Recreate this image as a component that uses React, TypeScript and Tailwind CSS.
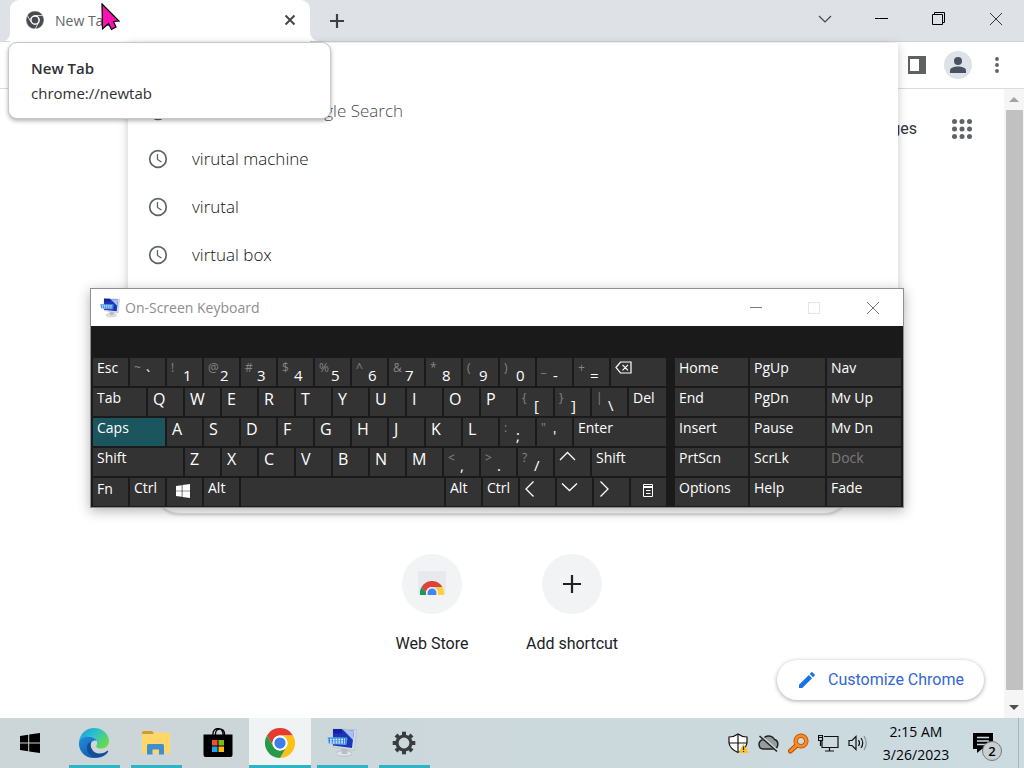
import React from "react";

const segoe = "font-['Open_Sans','Noto_Sans',sans-serif]";

function ChromeLogo({ className, mono = false }: { className: string; mono?: boolean }) {
  const c = mono ? ["#474a4e", "#474a4e", "#474a4e", "#474a4e"] : ["#e33b2e", "#fbc116", "#269a48", "#3f7ee8"];
  const line = mono ? "#ffffff" : "none";
  return (
    <svg viewBox="0 0 48 48" className={className} aria-hidden="true">
      <g stroke={line} strokeWidth="1.500">
        <path fill={c[0]} d="M24 12H44.8A24 24 0 0 0 3.2 12L13.6 30A12 12 0 0 1 24 12z" />
        <path fill={c[1]} d="M44.8 12A24 24 0 0 1 24 48L34.4 30A12 12 0 0 0 24 12z" />
        <path fill={c[2]} d="M24 48A24 24 0 0 1 3.2 12L13.6 30A12 12 0 0 0 34.4 30z" />
      </g>
      <circle cx="24" cy="24" r="12" fill="#fff" />
      <circle cx="24" cy="24" r="9" fill={c[3]} />
    </svg>
  );
}

function WindowsLogo({ className }: { className: string }) {
  return (
    <svg viewBox="0 0 20 20" className={className} fill="currentColor" aria-hidden="true">
      <path d="M0 2.9L8.2 1.7V9.5H0zM9.2 1.5L20 0V9.5H9.2zM0 10.5H8.2V18.3L0 17.1zM9.2 10.5H20V20L9.2 18.5z" />
    </svg>
  );
}

function KeyboardAppIcon({ className }: { className: string }) {
  return (
    <svg viewBox="0 0 30 30" className={className} aria-hidden="true">
      <ellipse cx="17" cy="25.500" rx="8" ry="2.800" fill="#dfe3e6" stroke="#a9aeb3" strokeWidth=".6" />
      <path d="M14 20h7l-1 6h-5z" fill="#b9bec3" />
      <path d="M6 1L29.500 1.500L27.500 22.500L6 19z" fill="#d5dbe4" stroke="#aab2bf" strokeWidth=".5" />
      <path d="M6 1L27 2.500L25 20L6 17.500z" fill="#1b35b8" />
      <path d="M16 1.700L27 2.500L26 12z" fill="#a9c2f4" />
      <path d="M6 1h9v4.500H6z" fill="#1620a5" />
      <path d="M1 9.500L20 10L19 16.500L2 15.500z" fill="#2f83dc" stroke="#6bb0f0" strokeWidth=".8" />
      <g stroke="#e5f4ff" strokeWidth="1.200" strokeDasharray="1.800 1">
        <path d="M3 11.300H18M3 13.100H18M3 14.900H18" />
      </g>
    </svg>
  );
}

function EdgeIcon() {
  return (
    <svg viewBox="0 0 30 30" className="size-[30px]" aria-hidden="true">
      <defs>
        <linearGradient id="edgeTop" x1="0" y1="0" x2="1" y2=".6">
          <stop offset="0" stopColor="#1b98da" />
          <stop offset=".5" stopColor="#2bc0cf" />
          <stop offset="1" stopColor="#68d94e" />
        </linearGradient>
        <linearGradient id="edgeLow" x1="0" y1="0" x2=".6" y2="1">
          <stop offset="0" stopColor="#1e8fdc" />
          <stop offset="1" stopColor="#155fb0" />
        </linearGradient>
      </defs>
      <path fill="url(#edgeTop)" d="M0 14C1 6 7 0 15 0C24 0 30 6.500 30 13C30 18 26 20.500 22 20.500C18 20.500 16.500 19 17.500 17.500C19.500 14.500 17 8.500 10.500 8.500C5.500 8.500 1.500 11 0 14z" />
      <path fill="url(#edgeLow)" d="M0 14C2 9.500 7 8 11 8.500C14.500 9 17 11 17.800 13C15 11.500 10.500 14.500 10.500 19C10.500 24.500 15 29 19 29.300C8 32.500 -1 24 0 14z" />
      <path fill="#144d97" d="M12.500 13.500C10 19 14 25.500 20.500 25.500C24 25.500 26.500 24.200 27.800 23C29 22.300 29.500 23 29 24C27 27 23 29.500 18.500 29.700C12 29.500 7 24.500 8 18.500C8.600 15.600 10.500 14.200 12.500 13.500z" />
    </svg>
  );
}

function ExplorerIcon() {
  return (
    <svg viewBox="0 0 28 24" className="h-[24px] w-[28px]" aria-hidden="true">
      <path fill="#d99a22" d="M0 1.500Q0 0 1.500 0H10L12.500 3H0z" />
      <path fill="#ffd769" d="M0 3.500H10L13 1.500H26Q28 1.500 28 3.500V21Q28 22.500 26.500 22.500H1.500Q0 22.500 0 21z" />
      <path fill="#3f8fcf" d="M5 14.500Q5 13 6.500 13H20.500Q22 13 22 14.500V23.500H17V18.500H10.500V23.500H5z" />
    </svg>
  );
}

function StoreIcon() {
  return (
    <svg viewBox="0 0 30 30" className="size-[30px]" aria-hidden="true">
      <path d="M10 8V5.500a5 5 0 0 1 10 0V8M12.500 8V5.500a4.500 4.500 0 0 1 9 0V8" fill="none" stroke="#000" strokeWidth="1.300" />
      <path d="M.5 6.500H29.500V27Q29.500 29 27.500 29H2.500Q.5 29 .5 27z" />
      <path fill="#f0512d" d="M9 12h5.500v5.500H9z" />
      <path fill="#7fbb16" d="M15.500 12H21v5.500h-5.500z" />
      <path fill="#20a4ec" d="M9 18.500h5.500V24H9z" />
      <path fill="#fdb913" d="M15.500 18.500H21V24h-5.500z" />
    </svg>
  );
}

function GearIcon() {
  return (
    <svg viewBox="0 0 24 24" className="size-[24px]" aria-hidden="true">
      <g fill="none" stroke="#393d40">
        <circle cx="12" cy="12" r="7" strokeWidth="3.200" />
        <g strokeWidth="4">
          {[0, 45, 90, 135, 180, 225, 270, 315].map((a) => (
            <path key={a} d="M12 4.500V.7" transform={`rotate(${a} 12 12)`} />
          ))}
        </g>
      </g>
    </svg>
  );
}

const Close = ({ className }: { className: string }) => (
  <svg viewBox="0 0 14 14" className={className} fill="none" stroke="currentColor" aria-hidden="true">
    <path d="M1 1L13 13M13 1L1 13" />
  </svg>
);

function TabStrip() {
  return (
    <header className="flex h-[42px] shrink-0 border-b border-[#cfd2d5] bg-[#dee1e6]">
      <span className="w-[10px] shrink-0 bg-white"><span className="block h-[42px] w-full rounded-br-[9px] bg-[#dee1e6]" /></span>
      <div role="tab" aria-selected="true" className="flex h-[42px] w-[300px] items-center rounded-t-[9px] bg-white pr-[12px] pb-[2px] pl-[16px]">
        <ChromeLogo mono className="size-[18px]" />
        <span className={`flex-1 pl-[11px] text-[14px] text-[#64676b] ${segoe}`}>New Tab</span>
        <button aria-label="Close tab" className="grid size-[16px] place-items-center text-[#45484b]">
          <svg viewBox="0 0 12 12" className="size-[12px]" stroke="currentColor" strokeWidth="2" aria-hidden="true">
            <path d="M1.500 1.500L10.500 10.500M10.500 1.500L1.500 10.500" />
          </svg>
        </button>
      </div>
      <div className="flex flex-1 bg-white">
        <div className="flex h-[41px] flex-1 rounded-bl-[9px] bg-[#dee1e6]">
          <button aria-label="New tab" className="grid w-[54px] place-items-center text-[#3c4043]">
            <svg viewBox="0 0 14 14" className="size-[14px]" stroke="currentColor" strokeWidth="2.200" aria-hidden="true">
              <path d="M7 0V14M0 7H14" />
            </svg>
          </button>
          <div className="ml-auto flex h-[37px]">
            <button aria-label="Search tabs" className="grid w-[57px] place-items-center text-[#44474a]">
              <svg viewBox="0 0 14 8" className="h-[8px] w-[14px]" fill="none" stroke="currentColor" strokeWidth="1.200" aria-hidden="true">
                <path d="M1 1L7 7L13 1" />
              </svg>
            </button>
            <button aria-label="Minimize" className="grid w-[57px] place-items-center">
              <span className="h-px w-[13px] bg-black" />
            </button>
            <button aria-label="Restore" className="grid w-[57px] place-items-center">
              <svg viewBox="0 0 13 13" className="size-[13px]" fill="none" stroke="#000" aria-hidden="true">
                <path d="M.5 2.500H10.500V12.500H.5zM2.500 2.500V.5H12.500V10.500H10.500" />
              </svg>
            </button>
            <button aria-label="Close" className="grid w-[57px] place-items-center text-[#303236]">
              <Close className="size-[14px]" />
            </button>
          </div>
        </div>
      </div>
    </header>
  );
}

function Toolbar() {
  return (
    <div className="flex h-[47px] shrink-0 items-center justify-end border-b border-[#d9dbdd] bg-white pr-[25px]">
      <button aria-label="Side panel" className="mr-[18px]">
        <svg viewBox="0 0 18 18" className="size-[18px]" aria-hidden="true">
          <path fill="#5d6163" d="M0 0H18V18H0zM2 3V15H11V3z" fillRule="evenodd" />
        </svg>
      </button>
      <button aria-label="Profile" className="mr-[23px] grid size-[28px] place-items-center rounded-full bg-[#dde1e8]">
        <svg viewBox="0 0 16 16" className="size-[16px]" fill="#4a5163" aria-hidden="true">
          <circle cx="8" cy="4" r="4" />
          <path d="M0 16V13.500C0 10.500 4.500 9.500 8 9.500S16 10.500 16 13.500V16z" />
        </svg>
      </button>
      <button aria-label="Menu">
        <svg viewBox="0 0 4 16" className="h-[16px] w-[4px]" fill="#5d6163" aria-hidden="true">
          <circle cx="2" cy="2" r="1.900" /><circle cx="2" cy="8" r="1.900" /><circle cx="2" cy="14" r="1.900" />
        </svg>
      </button>
    </div>
  );
}

function Shortcut({ label, children }: { label: string; children: React.ReactNode }) {
  return (
    <a href="#" className="flex w-[140px] flex-col items-center gap-[18px]">
      <span className="grid size-[60px] place-items-center rounded-full bg-[#f1f3f4]">{children}</span>
      <span className="text-[16px] leading-[24px] text-[#202124]">{label}</span>
    </a>
  );
}

function NewTabPage() {
  return (
    <div className="flex min-h-0 flex-1 bg-white font-[Roboto,sans-serif]">
      <main className="relative flex flex-1 flex-col items-center">
        <nav className="flex h-[80px] w-full items-center justify-end gap-[35px] pr-[32px]">
          <a href="#" className="text-[16px] text-[#303134]">Images</a>
          <button aria-label="Apps">
            <svg viewBox="0 0 20 20" className="size-[20px]" fill="#5f6368" aria-hidden="true">
              {[2.5, 10, 17.5].map((y) => [2.5, 10, 17.5].map((x) => <circle key={`${x}-${y}`} cx={x} cy={y} r="2.500" />))}
            </svg>
          </button>
        </nav>
        <input
          aria-label="Search"
          className="mt-[296px] h-[49px] w-full max-w-[694px] shrink-0 rounded-full border border-[#e2e4e6] bg-white px-6 shadow-[0_1px_3px_rgba(0,0,0,0.2)]"
        />
        <div className="flex pt-[40px]">
          <Shortcut label="Web Store">
            <svg viewBox="0 0 28 26" className="h-[26px] w-[28px]" aria-hidden="true">
              <rect width="28" height="24" rx="2" fill="#e7e9ed" />
              <svg x="2" y="10" width="24" height="14" viewBox="0 0 48 28">
                <path fill="#db4437" d="M24 12H44.800A24 24 0 0 0 3.200 12L13.600 30A12 12 0 0 1 24 12z" />
                <path fill="#ffcd40" d="M24 12H44.800A24 24 0 0 1 48 28H36z" />
                <path fill="#0f9d58" d="M3.200 12A24 24 0 0 0 0 28H13L13.600 28z" />
                <circle cx="24" cy="24" r="12" fill="#f1f3f4" />
                <circle cx="24" cy="24" r="9" fill="#4285f4" />
              </svg>
            </svg>
          </Shortcut>
          <Shortcut label="Add shortcut">
            <svg viewBox="0 0 18 18" className="size-[18px]" stroke="#202124" strokeWidth="2.200" aria-hidden="true">
              <path d="M9 0V18M0 9H18" />
            </svg>
          </Shortcut>
        </div>
        <button className="absolute right-[20px] bottom-[18px] flex h-[40px] items-center gap-[13px] rounded-full bg-white pr-[20px] pl-[22px] text-[16px] text-[#3367d6] shadow-[0_1px_4px_rgba(0,0,0,0.35)]">
          <svg viewBox="0 0 16 16" className="size-[16px]" fill="#1a73e8" aria-hidden="true">
            <path d="M0 16V12.700L9.800 2.900L13.100 6.200L3.300 16zM10.800 1.900L12.400.3Q12.900 -.1 13.400.3L15.700 2.600Q16.100 3.100 15.700 3.600L14.100 5.200z" />
          </svg>
          Customize Chrome
        </button>
      </main>
      <div aria-hidden="true" className="flex w-[20px] flex-col items-center bg-[#f5f5f5]">
        <svg viewBox="0 0 10 5" className="my-[8px] h-[5px] w-[10px]" fill="#a3a3a3"><path d="M0 5L5 0L10 5z" /></svg>
        <div className="w-[17px] flex-1 bg-[#c1c1c1]" />
        <svg viewBox="0 0 10 5" className="mt-[15px] mb-[8px] h-[5px] w-[10px]" fill="#505050"><path d="M0 0L5 5L10 0z" /></svg>
      </div>
    </div>
  );
}

function Suggestions() {
  return (
    <section className={`absolute top-[43px] left-[128px] h-[270px] w-[770px] bg-white pt-[44px] text-[17px] font-light text-[#101114] shadow-[0_2px_9px_rgba(0,0,0,0.22)] ${segoe}`}>
      <ul>
        {["", "virutal machine", "virutal", "virtual box"].map((text) => (
          <li key={text} className="flex h-[48px] items-center gap-[24px] pl-[20px]">
            <svg viewBox="0 0 20 20" className="size-[20px]" fill="none" stroke="#5f6368" strokeWidth="1.700" aria-hidden="true">
              <circle cx="10" cy="10" r="8.300" /><path d="M9.500 5V10.500L13.500 13" strokeWidth="1.300" />
            </svg>
            {text || <span className="w-[211px] text-right text-[#484b4e]">Google Search</span>}
          </li>
        ))}
      </ul>
    </section>
  );
}

function TabTooltip() {
  return (
    <div role="tooltip" className={`absolute top-[42px] left-[8px] h-[77px] w-[323px] rounded-[9px] border border-[#c6c8ca] bg-white px-[22px] pt-[13px] text-[15px] leading-[25px] text-[#303134] shadow-[0_2px_4px_rgba(0,0,0,0.3)] ${segoe}`}>
      <p className="font-semibold">New Tab</p>
      <p>chrome://newtab</p>
    </div>
  );
}

function Key({ children, label, w = "w-[35px]", on = false }: { children?: React.ReactNode; label?: string; w?: string; on?: boolean }) {
  return (
    <button aria-label={label} className={`h-[28px] shrink-0 overflow-hidden pl-[4px] text-left text-[14px] leading-[19px] whitespace-nowrap ${w} ${on ? "bg-[#1b555d]" : "bg-[#333333]"} flex items-start`}>
      {children}
    </button>
  );
}

const Letters = ({ text }: { text: string }) => (
  <>
    {text.split("").map((c) => (
      <Key key={c}><span className="pl-px text-[16px] leading-[22px]">{c}</span></Key>
    ))}
  </>
);

const Pairs = ({ pairs }: { pairs: string[] }) => (
  <>
    {pairs.map((p) => (
      <Key key={p}>
        <span className="w-[12px] text-[12px] leading-[20px] text-[#858585]">{p[0]}</span>
        <span className="pt-[6px] text-[15px] leading-[22px]">{p[1]}</span>
      </Key>
    ))}
  </>
);

const Arrow = ({ label, d }: { label: string; d: string }) => (
  <Key label={label}>
    <svg viewBox="0 0 18 18" className="mt-[2px] size-[18px]" fill="none" stroke="#fff" strokeWidth="1.300" aria-hidden="true"><path d={d} /></svg>
  </Key>
);

const Row = ({ children }: { children: React.ReactNode }) => <div className="flex gap-[2px]">{children}</div>;
const fill = "min-w-0 flex-1";

function OnScreenKeyboard() {
  return (
    <section className={`absolute top-[288px] left-[90px] w-[814px] border border-[#8f8f8f] bg-[#1a1a1a] text-white shadow-[0_3px_12px_rgba(0,0,0,0.3)] ${segoe}`}>
      <header className="flex h-[37px] items-center bg-white pl-[9px] text-[14px] text-[#8e8e8e]">
        <KeyboardAppIcon className="size-[20px]" />
        <h2 className="flex-1 pl-[5px]">On-Screen Keyboard</h2>
        <button aria-label="Minimize" className="grid h-full w-[58px] place-items-center"><span className="h-px w-[12px] bg-[#777777]" /></button>
        <button aria-label="Maximize" disabled className="grid h-full w-[58px] place-items-center"><span className="size-[12px] border border-[#e6e6e6]" /></button>
        <button aria-label="Close" className="grid h-full w-[60px] place-items-center text-[#777777]"><Close className="size-[14px]" /></button>
      </header>
      <div className="flex px-[2px] pt-[32px] pb-px">
        <div className="flex w-[573px] flex-col gap-[2px]">
          <Row>
            <Key>Esc</Key>
            <Pairs pairs={["~`", "!1", "@2", "#3", "$4", "%5", "^6", "&7", "*8", "(9", ")0", "_-", "+="]} />
            <Key w={fill} label="Backspace">
              <svg viewBox="0 0 17 13" className="mt-[3px] h-[13px] w-[17px]" fill="none" stroke="#fff" strokeWidth="1.200" aria-hidden="true">
                <path d="M1 6.500L5.500 1H16V12H5.500zM7.500 3.800L13 9.300M13 3.800L7.500 9.300" />
              </svg>
            </Key>
          </Row>
          <Row>
            <Key w="w-[53px]">Tab</Key>
            <Letters text="QWERTYUIOP" />
            <Pairs pairs={["{[", "}]", "|\\"]} />
            <Key w={fill}>Del</Key>
          </Row>
          <Row>
            <Key w="w-[72px]" on>Caps</Key>
            <Letters text="ASDFGHJKL" />
            <Pairs pairs={[":;", "\"'"]} />
            <Key w={fill}>Enter</Key>
          </Row>
          <Row>
            <Key w="w-[90px]">Shift</Key>
            <Letters text="ZXCVBNM" />
            <Pairs pairs={["<,", ">.", "?/"]} />
            <Arrow label="Up" d="M1 10L8.500 2.500L16 10" />
            <Key w={fill}>Shift</Key>
          </Row>
          <Row>
            <Key><span className="leading-[22px]">Fn</span></Key>
            <Key>Ctrl</Key>
            <Key label="Windows"><span className="pt-[6px] pl-[5px]"><WindowsLogo className="size-[14px]" /></span></Key>
            <Key>Alt</Key>
            <Key w={fill} label="Space" />
            <Key>Alt</Key>
            <Key>Ctrl</Key>
            <Arrow label="Left" d="M9.500 1.500L2 9L9.500 16.500" />
            <Arrow label="Down" d="M1 3.500L8.500 10.500L16 3.500" />
            <Arrow label="Right" d="M2.500 1.500L10 9L2.500 16.500" />
            <Key label="Menu">
              <svg viewBox="0 0 10 13" className="mt-[6px] ml-[8px] h-[13px] w-[10px]" fill="none" stroke="#fff" aria-hidden="true">
                <path d="M.5 .5H9.500V12.500H.5zM.5 2.500H9.500M.5 3.500H9.500M3 6.500H7.500M3 9.500H7.500" />
              </svg>
            </Key>
          </Row>
        </div>
        <div className="ml-[9px] grid flex-1 auto-rows-[28px] grid-cols-[73px_75px_1fr] gap-[2px]">
          {["Home", "PgUp", "Nav", "End", "PgDn", "Mv Up", "Insert", "Pause", "Mv Dn", "PrtScn", "ScrLk", "Dock", "Options", "Help", "Fade"].map((t) => (
            <Key key={t} w="w-auto"><span className={t === "Dock" ? "text-[#7b7b7b]" : ""}>{t}</span></Key>
          ))}
        </div>
      </div>
    </section>
  );
}

function TaskButton({ label, running = false, active = false, children }: { label: string; running?: boolean; active?: boolean; children: React.ReactNode }) {
  return (
    <button aria-label={label} className={`flex h-[50px] w-[62px] flex-col items-center ${active ? "bg-[#eff3f4]" : ""}`}>
      <span className="grid flex-1 place-items-center pt-[3px]">{children}</span>
      <span className={`h-[3px] ${active ? "w-full" : "w-[51px]"} ${running ? "bg-[#2eb4c4]" : ""}`} />
    </button>
  );
}

function Taskbar() {
  return (
    <footer className={`flex h-[50px] shrink-0 bg-linear-to-r from-[#ccd5d7] to-[#cbdbe0] text-black ${segoe}`}>
      <button aria-label="Start" className="grid w-[63px] place-items-center pr-[3px]"><WindowsLogo className="size-[20px]" /></button>
      <TaskButton label="Edge" running><EdgeIcon /></TaskButton>
      <TaskButton label="File Explorer" running><ExplorerIcon /></TaskButton>
      <TaskButton label="Store"><StoreIcon /></TaskButton>
      <TaskButton label="Chrome" running active><ChromeLogo className="size-[30px]" /></TaskButton>
      <TaskButton label="On-Screen Keyboard" running><KeyboardAppIcon className="size-[30px]" /></TaskButton>
      <TaskButton label="Settings" running><GearIcon /></TaskButton>
      <div className="ml-auto flex items-center">
        <div className="flex items-center gap-[9px]">
          <svg viewBox="0 0 21 21" className="size-[21px]" aria-hidden="true">
            <path d="M10 1Q14 4 19 4V10Q18 16 10 19.500Q2 16 1 10V4Q6 4 10 1z" fill="#fff" stroke="#111" strokeWidth="1.200" />
            <path d="M10 1V19M1 10H19" stroke="#111" strokeWidth="1.200" />
            <path d="M15.500 10.500L20.500 20H10.500z" fill="#fcc21b" />
            <path d="M15.500 13.500V17M15.500 18V19" stroke="#222" strokeWidth="1.200" />
          </svg>
          <svg viewBox="0 0 21 20" className="h-[20px] w-[21px]" aria-hidden="true">
            <path d="M5 16H16Q20 15.500 19.800 10.500Q19.500 7 16.500 6.500Q14.500 3 10.500 3Q6.500 3 5.500 6.500Q1 7.500 1 11.500Q1.500 16 5 16z" fill="#959da0" stroke="#222" strokeWidth="1.500" />
            <path d="M2.500 3L19.500 18" stroke="#ccd5d7" strokeWidth="3" /><path d="M1.500 3L19 18.500" stroke="#222" strokeWidth="1.500" />
          </svg>
          <svg viewBox="0 0 21 21" className="size-[21px]" fill="none" aria-hidden="true">
            <path d="M8.500 12.500L2.500 18" stroke="#b84a08" strokeWidth="5" strokeLinecap="round" />
            <circle cx="13" cy="8" r="5.300" stroke="#b84a08" strokeWidth="4.500" />
            <path d="M9 12L2.500 18" stroke="#fa8b1c" strokeWidth="3" strokeLinecap="round" />
            <circle cx="13" cy="8" r="5.300" stroke="#fa8b1c" strokeWidth="3" />
          </svg>
          <svg viewBox="0 0 21 18" className="h-[18px] w-[21px]" fill="none" stroke="#111" strokeWidth="1.200" aria-hidden="true">
            <path d="M6 2.500H20V13.500H4V7M11.500 13.500V17M7 17H16M.5 1.500H4.500V6.500H.5zM2.500 6.500V12M1 3.500H4" />
          </svg>
          <svg viewBox="0 0 21 18" className="h-[18px] w-[21px]" fill="none" stroke="#111" strokeWidth="1.200" aria-hidden="true">
            <path d="M1 6.500H4L8 2.500V15.500L4 11.500H1zM10.500 6Q12.500 9 10.500 12M13 4Q16.500 9 13 14" />
            <path d="M16 2Q20.500 9 16 16" stroke="#8a9294" />
          </svg>
        </div>
        <time className="ml-[8px] w-[78px] text-center text-[14px] leading-[23px] whitespace-nowrap">2:15 AM<br />3/26/2023</time>
        <button aria-label="Notifications" className="relative ml-[18px] h-[22px] w-[20px]">
          <svg viewBox="0 0 20 20" className="size-[20px]" aria-hidden="true">
            <path d="M0 0H20V16H9L4 20V16H0z" />
            <path d="M4 4.500H16M4 8H16M4 11.500H16" stroke="#cbdbe0" strokeWidth="1.300" />
          </svg>
          <span className="absolute top-[9px] left-[9px] grid size-[20px] place-items-center rounded-full border border-[#777777] bg-[#c7cfd2] text-[13px] leading-none font-semibold">2</span>
        </button>
        <span className="ml-[25px] h-[50px] w-[6px] border-l border-[#a8b5b9]" />
      </div>
    </footer>
  );
}

export default function App() {
  return (
    <div className="relative flex h-screen flex-col overflow-hidden bg-white">
      <TabStrip />
      <Toolbar />
      <NewTabPage />
      <Taskbar />
      <Suggestions />
      <TabTooltip />
      <OnScreenKeyboard />
      <svg viewBox="0 0 20 28" className="absolute top-[3px] left-[101px] h-[28px] w-[20px]" aria-hidden="true">
        <path d="M1 1L18 18L12.500 18.500L15 24L10.500 26.500L7.500 20.500L1.500 26z" fill="#f814b0" stroke="#000" strokeWidth="1.200" />
      </svg>
    </div>
  );
}
